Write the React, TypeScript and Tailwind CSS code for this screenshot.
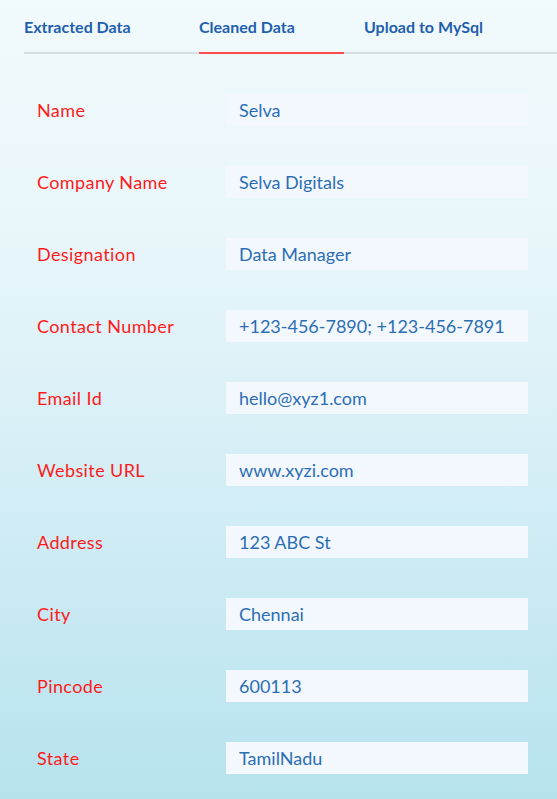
import React from "react";

const rows: [string, string][] = [
  ["Name", "Selva"],
  ["Company Name", "Selva Digitals"],
  ["Designation", "Data Manager"],
  ["Contact Number", "+123-456-7890; +123-456-7891"],
  ["Email Id", "hello@xyz1.com"],
  ["Website URL", "www.xyzi.com"],
  ["Address", "123 ABC St"],
  ["City", "Chennai"],
  ["Pincode", "600113"],
  ["State", "TamilNadu"],
];

export default function App() {
  return (
    <div
      className="w-[557px] h-[799px] overflow-hidden bg-[linear-gradient(180deg,#f1fafc_0%,#e8f6fa_30%,#cdebf4_70%,#b6e2ee_100%)]"
      style={{ fontFamily: "Lato, 'Noto Sans', sans-serif" }}
    >
      <div className="pl-[24px]">
        <div className="flex h-[54px] border-b-2 border-[#d6e0e3] text-[16px] font-bold text-[#1f5fae]">
          <div className="w-[175px] pt-[17px] leading-[20px]">Extracted Data</div>
          <div className="w-[165px] pt-[17px] leading-[20px]">
            <div className="w-[145px] h-[37px] border-b-2 border-[#ff4b4b]">Cleaned Data</div>
          </div>
          <div className="pt-[17px] leading-[20px]">Upload to MySql</div>
        </div>
      </div>
      <div className="pt-[40px] pl-[37px] flex flex-col gap-[40px]">
        {rows.map(([k, v]) => (
          <div key={k} className="flex items-center h-[32px]">
            <div className="w-[189px] text-[18px] tracking-[0.4px] text-[#ff1a1a]">{k}</div>
            <div className="w-[302px] h-[32px] bg-[#f2f8fe] flex items-center pl-[13px] text-[18px] text-[#2d6eb3]">
              {v}
            </div>
          </div>
        ))}
      </div>
    </div>
  );
}
